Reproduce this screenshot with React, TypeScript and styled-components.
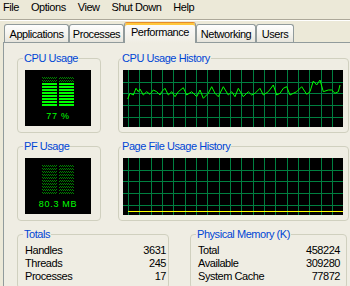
import React, { useId } from 'react';
import styled, { createGlobalStyle } from 'styled-components';

const GlobalStyle = createGlobalStyle`
  html, body {
    margin: 0;
    padding: 0;
    overflow: hidden;
  }
  body {
    width: 350px;
    height: 286px;
    background: #ece9d8;
    font-family: 'Liberation Sans', Arial, sans-serif;
    font-size: 11px;
    letter-spacing: -0.45px;
    color: #000;
  }
`;

// CPU trace read off the screenshot, in 3x zoom coords of the graph crop
const cpuTrace: [number, number][] = [
  [38, 162], [45, 145], [55, 150], [63, 130], [70, 140], [75, 132], [85, 150], [95, 140],
  [105, 148], [115, 135], [125, 140], [135, 150], [140, 140], [150, 130], [160, 150],
  [170, 140], [180, 155], [190, 140], [205, 128], [215, 150], [230, 140], [245, 155],
  [255, 135], [265, 160], [280, 145], [290, 125], [300, 145], [310, 155], [325, 125],
  [340, 150], [350, 140], [360, 155], [370, 130], [385, 155], [400, 140], [410, 150],
  [420, 145], [435, 130], [445, 150], [460, 140], [475, 120], [485, 150], [495, 145],
  [505, 130], [515, 125], [525, 150], [535, 145], [545, 140], [560, 125], [575, 148],
  [585, 140], [595, 108], [605, 120], [615, 105], [625, 140], [640, 135], [650, 135],
  [660, 145], [670, 140], [675, 120],
];

const menus = ['File', 'Options', 'View', 'Shut Down', 'Help'];
const tabs = [
  { label: 'Applications', w: 65 },
  { label: 'Processes', w: 55 },
  { label: 'Performance', w: 72, active: true },
  { label: 'Networking', w: 60 },
  { label: 'Users', w: 38 },
];

const Meter = ({ level }: { level: number }) => {
  const id = useId();
  const rows = 10;
  const lit = Math.round(level * rows);
  return (
    <svg width={32} height={30}>
      <defs>
        <pattern id={id} width={2} height={3} patternUnits="userSpaceOnUse">
          <rect x={0} y={0} width={1} height={1} fill="#008000" />
          <rect x={1} y={1} width={1} height={1} fill="#008000" />
        </pattern>
      </defs>
      {Array.from({ length: rows }).map((_, i) =>
        [0, 17].map((x) => (
          <rect
            key={`${i}-${x}`}
            x={x}
            y={i * 3}
            width={15}
            height={2}
            fill={i >= rows - lit ? '#00ff00' : `url(#${id})`}
          />
        ))
      )}
    </svg>
  );
};

const HistoryGraph = ({ trace, flat }: { trace?: [number, number][]; flat?: number }) => {
  const W = 220;
  const H = 57;
  const vlines: number[] = [];
  for (let x = 5; x < W; x += 11.33) vlines.push(Math.round(x) + 0.5);
  const hlines = [1, 2, 3, 4].map((i) => Math.round(i * 11.7) + 0.5);
  return (
    <GraphSvg width={W} height={H}>
      {vlines.map((x) => (
        <line key={x} x1={x} x2={x} y1={0} y2={H} stroke="#008040" />
      ))}
      {hlines.map((y) => (
        <line key={y} x1={0} x2={W} y1={y} y2={y} stroke="#008040" />
      ))}
      {trace && (
        <polyline
          fill="none"
          stroke="#00ff00"
          strokeWidth={1}
          points={trace.map(([x, y]) => `${(x / 3 - 8).toFixed(1)},${(y / 3 - 25).toFixed(1)}`).join(' ')}
        />
      )}
      {flat !== undefined && <line x1={5} x2={W} y1={flat} y2={flat} stroke="#ffff00" />}
    </GraphSvg>
  );
};

export default function App() {
  return (
    <>
      <GlobalStyle />
      <MenuBar>
        {menus.map((m) => (
          <MenuItem key={m}>{m}</MenuItem>
        ))}
      </MenuBar>
      <TabStrip>
        {tabs.map((t) => (
          <Tab key={t.label} $w={t.w} $active={t.active}>
            {t.label}
          </Tab>
        ))}
      </TabStrip>
      <Panel>
        <GraphRow>
          <Group>
            <Legend>CPU Usage</Legend>
            <Display>
              <Meter level={0.77} />
              <DisplayText>77 %</DisplayText>
            </Display>
          </Group>
          <Group $padLeft={4} $padRight={5}>
            <Legend>CPU Usage History</Legend>
            <HistoryGraph trace={cpuTrace} />
          </Group>
        </GraphRow>
        <GraphRow>
          <Group>
            <Legend>PF Usage</Legend>
            <Display>
              <Meter level={0} />
              <DisplayText>80.3 MB</DisplayText>
            </Display>
          </Group>
          <Group $padLeft={4} $padRight={5}>
            <Legend>Page File Usage History</Legend>
            <HistoryGraph flat={53.5} />
          </Group>
        </GraphRow>
        <InfoRow>
          <Group $padTop={3} $padRight={2}>
            <Legend>Totals</Legend>
            <Stat><span>Handles</span><span>3631</span></Stat>
            <Stat><span>Threads</span><span>245</span></Stat>
            <Stat><span>Processes</span><span>17</span></Stat>
          </Group>
          <Group $padTop={3} $padRight={6}>
            <Legend>Physical Memory (K)</Legend>
            <Stat><span>Total</span><span>458224</span></Stat>
            <Stat><span>Available</span><span>309280</span></Stat>
            <Stat><span>System Cache</span><span>77872</span></Stat>
          </Group>
        </InfoRow>
      </Panel>
    </>
  );
}

const MenuBar = styled.div`
  display: flex;
  gap: 12px;
  box-sizing: border-box;
  height: 20px;
  padding: 1px 0 0 3px;
  line-height: 13px;
  border-bottom: 1px solid #aca899;
  box-shadow: 0 1px 0 #fff;
`;

const MenuItem = styled.span`
  white-space: nowrap;
`;

const TabStrip = styled.div`
  display: flex;
  align-items: flex-end;
  height: 22px;
  padding-left: 4px;
`;

const Tab = styled.div<{ $w: number; $active?: boolean }>`
  position: relative;
  z-index: ${(p) => (p.$active ? 2 : 1)};
  box-sizing: border-box;
  width: ${(p) => p.$w}px;
  height: ${(p) => (p.$active ? 21 : 18)}px;
  margin-bottom: ${(p) => (p.$active ? -1 : 0)}px;
  padding-top: 3px;
  text-align: center;
  line-height: 13px;
  white-space: nowrap;
  border: 1px solid #919b9c;
  border-bottom: none;
  border-radius: 3px 3px 0 0;
  border-top-color: ${(p) => (p.$active ? '#e68b2c' : '#919b9c')};
  box-shadow: ${(p) => (p.$active ? 'inset 0 2px 0 #ffc73c' : 'none')};
  background: ${(p) =>
    p.$active
      ? 'linear-gradient(#fcfcfe, #efede3)'
      : 'linear-gradient(#fefefe, #f3f2ec 60%, #e6e4dc)'};
`;

const Panel = styled.div`
  box-sizing: border-box;
  width: 347px;
  height: 244px;
  overflow: hidden;
  margin-left: 3px;
  padding: 9px 0 0 13px;
  border: 1px solid #919b9c;
  border-right: none;
  border-bottom: none;
  background: #efede3;
  display: flex;
  flex-direction: column;
  gap: 7px;
`;

const GraphRow = styled.div`
  display: grid;
  grid-template-columns: 84px 231px;
  column-gap: 17px;
`;

const InfoRow = styled.div`
  display: grid;
  grid-template-columns: 152px 157px;
  column-gap: 21px;
`;

const Group = styled.fieldset<{ $padLeft?: number; $padRight?: number; $padTop?: number }>`
  margin: 0;
  min-width: 0;
  border: 1px solid #d0d0bf;
  border-radius: 4px;
  padding: ${(p) => p.$padTop ?? 5}px ${(p) => p.$padRight ?? 8}px 5px
    ${(p) => p.$padLeft ?? 7}px;
`;

const Legend = styled.legend`
  margin-left: -2px;
  padding: 0 1px;
  line-height: 13px;
  color: #0046d5;
  white-space: nowrap;
`;

const Display = styled.div`
  box-sizing: border-box;
  width: 66px;
  height: 56px;
  padding-top: 7px;
  background: #000;
  display: flex;
  flex-direction: column;
  align-items: center;

  svg {
    display: block;
  }
`;

const DisplayText = styled.div`
  margin-top: 4px;
  color: #00ff00;
  font-size: 9px;
  line-height: 11px;
  letter-spacing: 0.7px;
  white-space: nowrap;
`;

const GraphSvg = styled.svg`
  display: block;
  background: #000;
`;

const Stat = styled.div`
  display: flex;
  justify-content: space-between;
  line-height: 13px;
  white-space: nowrap;
`;
